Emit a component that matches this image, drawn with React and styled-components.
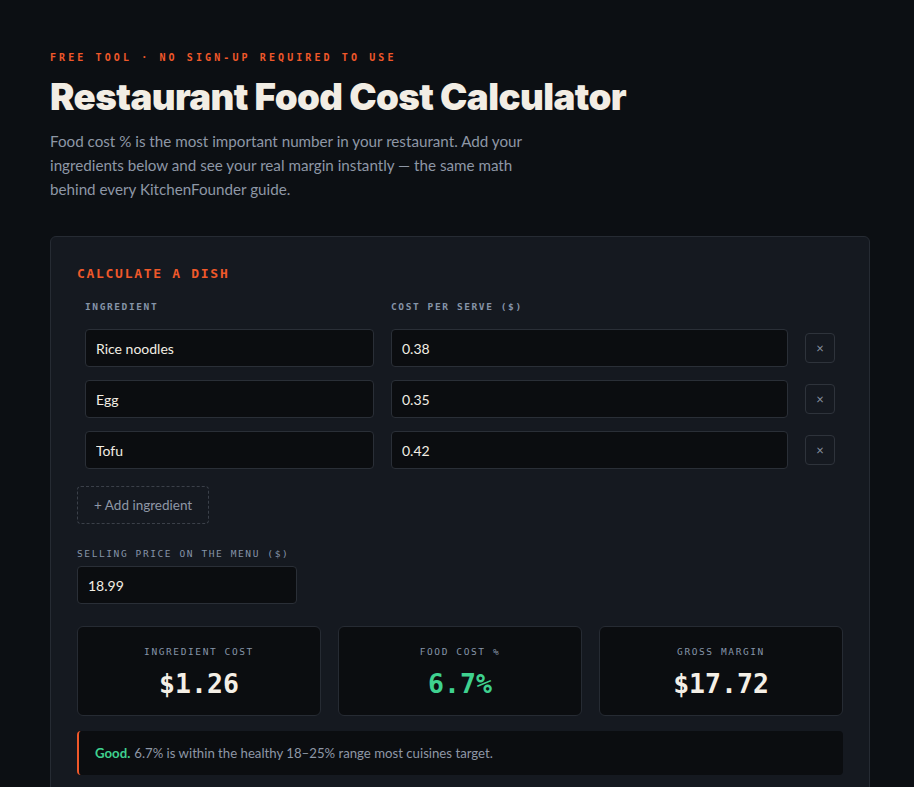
import React, { useState } from "react";
import styled, { createGlobalStyle } from "styled-components";

const GlobalStyle = createGlobalStyle`
  html, body {
    margin: 0;
    background: #0c0f13;
  }
  body {
    font-family: Lato, "Noto Sans", sans-serif;
    color: #e8e4dc;
  }
  * { box-sizing: border-box; }
`;

const mono = `"DejaVu Sans Mono", "Liberation Mono", monospace`;

const Page = styled.div`
  width: 820px;
  margin: 0 0 0 50px;
  padding-top: 52px;
`;

const Eyebrow = styled.div`
  font-family: ${mono};
  font-size: 10px;
  font-weight: bold;
  letter-spacing: 3.1px;
  color: #f0582a;
`;

const Title = styled.h1`
  margin: 12px 0 0;
  font-family: Inter, "Noto Sans", sans-serif;
  font-weight: 900;
  font-size: 36.7px;
  letter-spacing: -0.6px;
  line-height: 44px;
  color: #f2ede4;
`;

const Lead = styled.p`
  margin: 10px 0 0;
  width: 500px;
  font-size: 15.2px;
  line-height: 24px;
  color: #8e97a6;
`;

const Card = styled.section`
  margin-top: 35px;
  background: #151920;
  border: 1px solid #262b33;
  border-radius: 6px;
  padding: 29px 26px 40px;
`;

const CardTitle = styled.h2`
  margin: 0;
  font-family: ${mono};
  font-size: 13px;
  font-weight: bold;
  letter-spacing: 1.7px;
  color: #f0582a;
`;

const Grid = styled.div`
  display: grid;
  grid-template-columns: 289px 1fr 30px;
  column-gap: 17px;
  row-gap: 13px;
  align-items: center;
  padding: 0 8px;
  margin-top: 20px;
`;

const Label = styled.div`
  font-family: ${mono};
  font-size: 9.5px;
  font-weight: ${(p) => (p.$bold ? "bold" : "normal")};
  letter-spacing: 1.6px;
  color: #8594a8;
  text-transform: uppercase;
  margin-bottom: ${(p) => p.$mb || 0}px;
`;

const Input = styled.input`
  display: block;
  width: ${(p) => p.$w || "100%"};
  height: 38px;
  background: #0b0d10;
  border: 1px solid #2a2f37;
  border-radius: 4px;
  padding: 0 10px;
  font-family: Lato, "Noto Sans", sans-serif;
  font-size: 14px;
  color: #f2ede4;
  outline: none;
`;

const RemoveBtn = styled.button`
  width: 30px;
  height: 30px;
  background: #151920;
  border: 1px solid #2e333b;
  border-radius: 4px;
  color: #8a93a2;
  font-size: 13px;
  font-family: Lato, sans-serif;
  padding: 0;
  cursor: pointer;
`;

const AddBtn = styled.button`
  margin-top: 17px;
  height: 38px;
  padding: 0 16px;
  background: transparent;
  border: 1px dashed #3b4049;
  border-radius: 4px;
  color: #8e97a6;
  font-family: Lato, "Noto Sans", sans-serif;
  font-size: 13.5px;
  cursor: pointer;
`;

const Field = styled.div`
  margin-top: 24px;
`;

const Stats = styled.div`
  display: grid;
  grid-template-columns: repeat(3, 1fr);
  gap: 17px;
  margin-top: 22px;
`;

const Stat = styled.div`
  height: 90px;
  background: #0b0d10;
  border: 1px solid #262b33;
  border-radius: 6px;
  display: flex;
  flex-direction: column;
  align-items: center;
  padding-top: 19px;
`;

const StatValue = styled.div`
  margin-top: 11px;
  font-family: ${mono};
  font-weight: bold;
  font-size: 26.5px;
  color: ${(p) => p.$color || "#f4efe6"};
`;

const Note = styled.div`
  margin-top: 15px;
  height: 44px;
  display: flex;
  align-items: center;
  padding: 0 16px;
  background: #0b0d10;
  border-left: 2px solid #f0582a;
  border-radius: 4px;
  font-size: 13.2px;
  color: #8e97a6;

  & > b {
    color: #3fd18f;
    margin-right: 4px;
  }
`;

export default function App() {
  const [rows] = useState([
    { name: "Rice noodles", cost: "0.38" },
    { name: "Egg", cost: "0.35" },
    { name: "Tofu", cost: "0.42" },
  ]);

  return (
    <>
      <GlobalStyle />
      <Page>
        <Eyebrow>FREE TOOL · NO SIGN-UP REQUIRED TO USE</Eyebrow>
        <Title>Restaurant Food Cost Calculator</Title>
        <Lead>
          Food cost % is the most important number in your restaurant. Add your
          ingredients below and see your real margin instantly — the same math
          behind every KitchenFounder guide.
        </Lead>
        <Card>
          <CardTitle>CALCULATE A DISH</CardTitle>
          <Grid>
            <Label $bold $mb={4}>Ingredient</Label>
            <Label $bold $mb={4}>Cost per serve ($)</Label>
            <span />
            {rows.map((r) => (
              <React.Fragment key={r.name}>
                <Input defaultValue={r.name} />
                <Input defaultValue={r.cost} />
                <RemoveBtn>×</RemoveBtn>
              </React.Fragment>
            ))}
          </Grid>
          <AddBtn>+ Add ingredient</AddBtn>
          <Field>
            <Label $mb={7}>Selling price on the menu ($)</Label>
            <Input $w="220px" defaultValue="18.99" />
          </Field>
          <Stats>
            <Stat>
              <Label>Ingredient cost</Label>
              <StatValue>$1.26</StatValue>
            </Stat>
            <Stat>
              <Label>Food cost %</Label>
              <StatValue $color="#3fd18f">6.7%</StatValue>
            </Stat>
            <Stat>
              <Label>Gross margin</Label>
              <StatValue>$17.72</StatValue>
            </Stat>
          </Stats>
          <Note>
            <b>Good.</b> 6.7% is within the healthy 18–25% range most cuisines
            target.
          </Note>
        </Card>
      </Page>
    </>
  );
}
